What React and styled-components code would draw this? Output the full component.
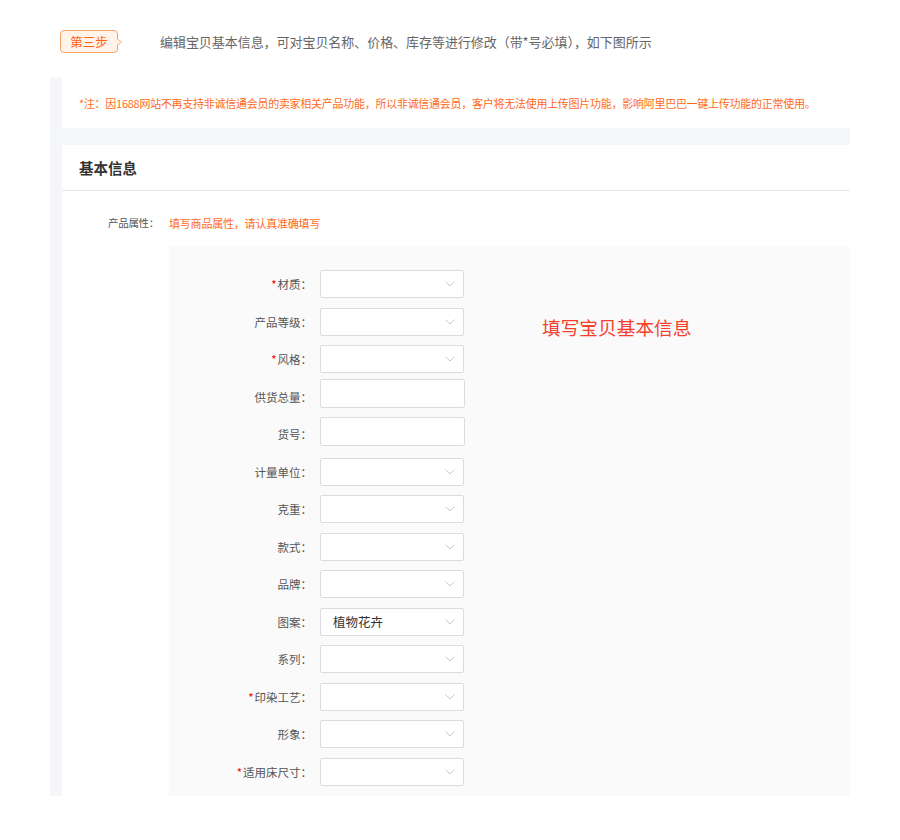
import React from "react";
import styled, { createGlobalStyle } from "styled-components";

const Global = createGlobalStyle`
  html, body { margin: 0; padding: 0; background: #fff; }
  body { font-family: "Noto Sans CJK SC", "Noto Sans", sans-serif; }
  * { box-sizing: border-box; }
`;

const Page = styled.div`
  width: 900px;
  height: 840px;
  padding-top: 30px;
  overflow: hidden;
`;

const StepRow = styled.div`
  display: flex;
  align-items: center;
  margin-left: 60px;
  height: 23px;
`;

const Badge = styled.div`
  position: relative;
  width: 58px;
  height: 23px;
  border: 1px solid #f5a46c;
  background: #fff3ea;
  border-radius: 4px;
  color: #ff6314;
  font-size: 12.5px;
  display: flex;
  align-items: center;
  justify-content: center;
  &::before {
    content: "";
    position: absolute;
    right: -5px;
    top: 7px;
    border-left: 5px solid #f5a46c;
    border-top: 4px solid transparent;
    border-bottom: 4px solid transparent;
  }
  &::after {
    content: "";
    position: absolute;
    right: -4px;
    top: 8px;
    border-left: 4px solid #fff3ea;
    border-top: 3px solid transparent;
    border-bottom: 3px solid transparent;
  }
`;

const StepText = styled.div`
  margin-left: 42px;
  color: #666;
  font-size: 13px;
  letter-spacing: -0.05px;
`;

const Shot = styled.div`
  margin: 24px 0 0 50px;
  width: 800px;
  height: 719px;
  background: #f5f6fa;
  padding-left: 12px;
  overflow: hidden;
  display: flex;
  flex-direction: column;
`;

const Notice = styled.div`
  background: #fff;
  height: 51px;
  padding: 18px 0 0 17px;
  color: #ff6a1a;
  font-size: 11px;
  line-height: 16px;
  letter-spacing: -0.27px;
  flex: none;
`;

const Card = styled.div`
  margin-top: 17px;
  background: #fff;
  flex: 1;
  display: flex;
  flex-direction: column;
`;

const CardHeader = styled.div`
  height: 46px;
  border-bottom: 1px solid #e4e4e4;
  padding: 13px 0 0 17px;
  font-size: 14.5px;
  font-weight: bold;
  color: #333;
  line-height: 20px;
`;

const AttrRow = styled.div`
  display: flex;
  height: 55px;
  padding-top: 24px;
  font-size: 11px;
  line-height: 16px;
`;

const AttrLabel = styled.div`
  width: 107px;
  padding-right: 10px;
  text-align: right;
  color: #555;
  font-size: 10.5px;
  letter-spacing: -0.3px;
`;

const AttrHint = styled.div`
  color: #ff6a1a;
  letter-spacing: -0.2px;
`;

const FormPanel = styled.div`
  margin-left: 107px;
  flex: 1;
  background: #fafafa;
  padding-top: 24px;
  display: flex;
`;

const FormCol = styled.div`
  display: flex;
  flex-direction: column;
`;

const Row = styled.div`
  display: flex;
  height: 37.5px;
  align-items: flex-start;
`;

const Label = styled.div`
  width: 143px;
  height: 28px;
  line-height: 28px;
  text-align: right;
  font-size: 11.5px;
  color: #555;
`;

const Star = styled.span`
  color: #f00;
  margin-right: 1px;
`;

const Select = styled.div`
  margin-left: 8px;
  width: 144px;
  height: 28px;
  background: #fff;
  border: 1px solid #dcdcdc;
  border-radius: 2px;
  display: flex;
  align-items: center;
  padding: 0 8px 0 12px;
  font-size: 12.5px;
  color: #333;
`;

const Value = styled.span`
  flex: 1;
`;

const TextInput = styled.div`
  margin-left: 8px;
  margin-top: -3.5px;
  width: 145px;
  height: 29px;
  background: #fff;
  border: 1px solid #dcdcdc;
  border-radius: 2px;
`;

const Annotation = styled.div`
  margin: 45px 0 0 77px;
  color: #f5402c;
  font-size: 18.7px;
  line-height: 24px;
`;

const Chevron = () => (
  <svg width="10" height="6" viewBox="0 0 10 6" style={{ marginLeft: "auto" }}>
    <path d="M0.5 0.5 L5 5 L9.5 0.5" fill="none" stroke="#c8c8c8" strokeWidth="1" />
  </svg>
);

const fields = [
  { label: "材质", req: true },
  { label: "产品等级" },
  { label: "风格", req: true },
  { label: "供货总量", input: true },
  { label: "货号", input: true },
  { label: "计量单位" },
  { label: "克重" },
  { label: "款式" },
  { label: "品牌" },
  { label: "图案", value: "植物花卉" },
  { label: "系列" },
  { label: "印染工艺", req: true },
  { label: "形象" },
  { label: "适用床尺寸", req: true },
];

export default function App() {
  return (
    <Page>
      <Global />
      <StepRow>
        <Badge>第三步</Badge>
        <StepText>编辑宝贝基本信息，可对宝贝名称、价格、库存等进行修改（带*号必填），如下图所示</StepText>
      </StepRow>
      <Shot>
        <Notice>
          *注：因1688网站不再支持非诚信通会员的卖家相关产品功能，所以非诚信通会员，客户将无法使用上传图片功能，影响阿里巴巴一键上传功能的正常使用。
        </Notice>
        <Card>
          <CardHeader>基本信息</CardHeader>
          <AttrRow>
            <AttrLabel>产品属性：</AttrLabel>
            <AttrHint>填写商品属性，请认真准确填写</AttrHint>
          </AttrRow>
          <FormPanel>
            <FormCol>
              {fields.map((f) => (
                <Row key={f.label}>
                  <Label>
                    {f.req && <Star>*</Star>}
                    {f.label}：
                  </Label>
                  {f.input ? (
                    <TextInput />
                  ) : (
                    <Select>
                      {f.value && <Value>{f.value}</Value>}
                      <Chevron />
                    </Select>
                  )}
                </Row>
              ))}
            </FormCol>
            <Annotation>填写宝贝基本信息</Annotation>
          </FormPanel>
        </Card>
      </Shot>
    </Page>
  );
}
